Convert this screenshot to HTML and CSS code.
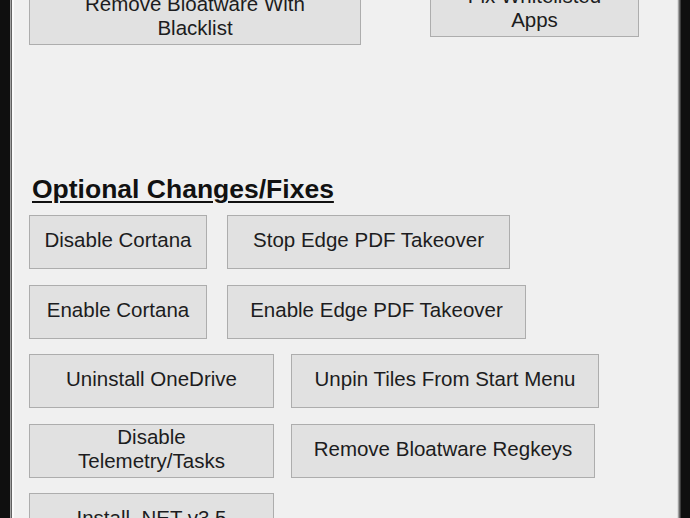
FILE: index.html
```html
<!DOCTYPE html>
<html lang="en">
<head>
<meta charset="utf-8">
<title>Windows10Debloater</title>
<link rel="stylesheet" href="styles.css">
</head>
<body>
<div class="frame">
  <div class="window">
    <div class="client">
      <div class="top-row">
        <button class="btn w-blacklist">Remove Bloatware With<br>Blacklist</button>
        <button class="btn w-fix raised">Fix Whitelisted<br>Apps</button>
      </div>
      <h2 class="section-title">Optional Changes/Fixes</h2>
      <div class="rows">
        <div class="row gap-a">
          <button class="btn w-cortana">Disable Cortana</button>
          <button class="btn w-stop-edge">Stop Edge PDF Takeover</button>
        </div>
        <div class="row gap-a">
          <button class="btn w-cortana">Enable Cortana</button>
          <button class="btn w-enable-edge">Enable Edge PDF Takeover</button>
        </div>
        <div class="row gap-b">
          <button class="btn w-main">Uninstall OneDrive</button>
          <button class="btn w-unpin">Unpin Tiles From Start Menu</button>
        </div>
        <div class="row gap-b">
          <button class="btn w-main">Disable<br>Telemetry/Tasks</button>
          <button class="btn w-regkeys">Remove Bloatware Regkeys</button>
        </div>
        <div class="row gap-b">
          <button class="btn w-main">Install .NET v3.5</button>
        </div>
      </div>
    </div>
  </div>
</div>
</body>
</html>
```

FILE: styles.css
```css
html, body {
  margin: 0;
  padding: 0;
  height: 518px;
  overflow: hidden;
  background: #0f0f0f;
}

.frame {
  margin-left: 10px;
  width: 669px;
  height: 518px;
  border-left: 1px solid #a3a3a3;
  border-right: 1px solid #3c3c3c;
  display: flex;
}

.window {
  flex: 1;
  border-left: 1px solid #626262;
  border-right: 1px solid #6a6a6a;
  display: flex;
}

.client {
  flex: 1;
  background: #f0f0f0;
  border-left: 2px solid #fbfbfb;
  border-right: 1px solid #a2a2a2;
  box-shadow: inset -1px 0 0 #dedede;
  padding-left: 15px;
  overflow: hidden;
  font-family: "Liberation Sans", Arial, sans-serif;
}

.btn {
  box-sizing: border-box;
  height: 54px;
  padding: 0 4px 4px;
  margin: 0;
  background: #e1e1e1;
  border: 1px solid #adadad;
  border-radius: 0;
  color: #1c1c20;
  font-family: "Liberation Sans", Arial, sans-serif;
  font-size: 20.5px;
  line-height: 24px;
  text-align: center;
  flex: none;
}

.top-row {
  display: flex;
  align-items: flex-start;
  gap: 69px;
  margin-top: -9px;
}

.top-row .raised {
  margin-top: -8px;
}

.section-title {
  margin: 0 0 0 3px;
  padding-top: 129px;
  font-size: 26.5px;
  line-height: 30px;
  font-weight: bold;
  color: #111111;
  text-decoration: underline;
  text-decoration-thickness: 2px;
  text-underline-offset: 3px;
}

.rows {
  margin-top: 11px;
  display: flex;
  flex-direction: column;
  row-gap: 15.5px;
}

.row {
  display: flex;
}

.gap-a { gap: 20px; }
.gap-b { gap: 17px; }

.w-blacklist { width: 332px; }
.w-fix { width: 209px; }
.w-cortana { width: 178px; }
.w-stop-edge { width: 283px; }
.w-enable-edge { width: 299px; }
.w-main { width: 245px; }
.w-unpin { width: 308px; }
.w-regkeys { width: 304px; }
```
